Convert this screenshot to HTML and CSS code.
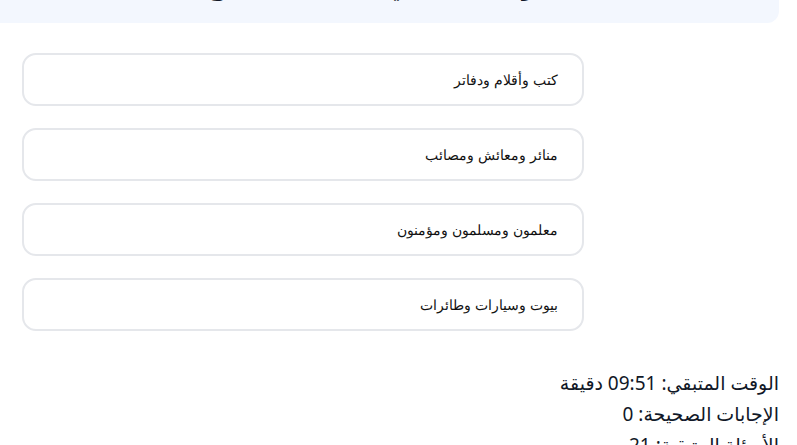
FILE: index.html
```html
<!DOCTYPE html>
<html lang="ar">
<head>
<meta charset="utf-8" />
<title>اختبار الجمع</title>
<link rel="stylesheet" href="styles.css">
</head>
<body dir="rtl">
<main class="page">
	<header class="quizHeader">
		<h1>اختر الكلمة التي تدل على الجمع</h1>
	</header>
	<div class="options">
		<button class="option">كتب وأقلام ودفاتر</button>
		<button class="option">منائر ومعائش ومصائب</button>
		<button class="option">معلمون ومسلمون ومؤمنون</button>
		<button class="option">بيوت وسيارات وطائرات</button>
	</div>
	<div class="stats">
		<p>الوقت المتبقي: 09:51 دقيقة</p>
		<p>الإجابات الصحيحة: 0</p>
		<p>الأسئلة المتبقية: 21</p>
	</div>
</main>
</body>
</html>
```

FILE: styles.css
```css
*{
	margin:0;
	padding:0;
	box-sizing:border-box;
}
body{
	font-family:"Noto Sans","DejaVu Sans",sans-serif;
	color:#111827;
	background:#fff;
	overflow:hidden;
}
.page{
	width:779px;
	margin:0 auto 0 0;
}
.quizHeader{
	background:#f3f7fe;
	border-bottom-right-radius:12px;
	margin-top:-46px;
	padding:14px 0 20px;
	text-align:center;
}
.quizHeader h1{
	font-size:24px;
	font-weight:700;
	line-height:35px;
	color:#111827;
}
.options{
	width:562px;
	margin:30px auto 0 22px;
	display:flex;
	flex-direction:column;
	gap:22px;
}
.option{
	height:53px;
	border:2px solid #e5e7eb;
	border-radius:14px;
	background:#fff;
	text-align:right;
	padding:0 24px 0 10px;
	font-family:"Liberation Sans",Arial,sans-serif;
	font-size:14px;
	color:#111;
}
.stats{
	margin-top:37px;
	font-size:19px;
	line-height:31px;
	color:#111827;
}
```
